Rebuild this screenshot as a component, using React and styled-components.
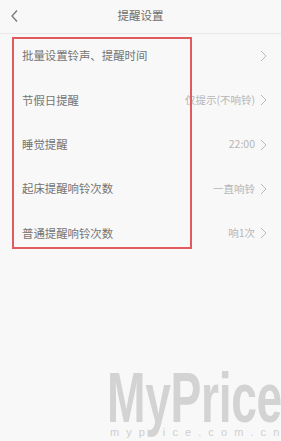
import React from "react";
import styled, { createGlobalStyle } from "styled-components";

const Global = createGlobalStyle`
  html, body { margin: 0; padding: 0; background: #f8f8f8; }
  body { font-family: "Noto Sans CJK SC", "Noto Sans", sans-serif; }
`;

const Screen = styled.div`
  position: relative;
  width: 281px;
  height: 441px;
  overflow: hidden;
  background: #f8f8f8;
`;

const Header = styled.div`
  position: relative;
  height: 33px;
  display: flex;
  align-items: center;
  justify-content: center;
  border-bottom: 1px solid #e8e8e8;
`;

const BackButton = styled.div`
  position: absolute;
  left: 10px;
  top: 9px;
  width: 10px;
  height: 14px;
  display: flex;
`;

const Title = styled.div`
  font-size: 11.5px;
  color: #6e6e6e;
  line-height: 1;
  margin-top: -1px;
`;

const List = styled.div`
  display: flex;
  flex-direction: column;
`;

const Row = styled.div`
  height: 44.3px;
  display: flex;
  align-items: center;
  padding: 0 14px 0 22px;
`;

const Label = styled.div`
  flex: 1;
  font-size: 11.4px;
  color: #747474;
  line-height: 1;
`;

const Value = styled.div`
  font-size: 10.5px;
  color: #b6b6b6;
  line-height: 1;
  margin-right: 5px;
`;

const Chevron = styled.svg`
  width: 7px;
  height: 12px;
  flex: none;
`;

const Highlight = styled.div`
  position: absolute;
  left: 12px;
  top: 37px;
  width: 176px;
  height: 208px;
  border: 2px solid #e05a5e;
  pointer-events: none;
`;

const Watermark = styled.div`
  position: absolute;
  left: 107px;
  top: 370px;
  display: flex;
  flex-direction: column;
  pointer-events: none;
`;

const Brand = styled.div`
  font-family: "Liberation Sans", Arial, sans-serif;
  font-weight: 700;
  font-size: 70px;
  line-height: 56px;
  height: 56px;
  color: #d3d3d3;
  transform: scaleX(0.66);
  transform-origin: left top;
  white-space: nowrap;
  letter-spacing: -0.5px;
`;

const Domain = styled.div`
  font-family: "Liberation Sans", Arial, sans-serif;
  font-size: 11px;
  line-height: 12px;
  color: #cfcfcf;
  letter-spacing: 7.1px;
  margin-left: 3px;
  white-space: nowrap;
`;

const rows = [
  { label: "批量设置铃声、提醒时间", value: "" },
  { label: "节假日提醒", value: "仅提示(不响铃)" },
  { label: "睡觉提醒", value: "22:00" },
  { label: "起床提醒响铃次数", value: "一直响铃" },
  { label: "普通提醒响铃次数", value: "响1次" },
];

const Arrow = () => (
  <Chevron viewBox="0 0 7 12">
    <polyline points="1,1 6,6 1,11" fill="none" stroke="#b8b8b8" strokeWidth="1" />
  </Chevron>
);

export default function App() {
  return (
    <Screen>
      <Global />
      <Header>
        <BackButton>
          <svg width="10" height="14" viewBox="0 0 10 14">
            <polyline points="7,1.5 2,7 7,12.5" fill="none" stroke="#777" strokeWidth="1.3" />
          </svg>
        </BackButton>
        <Title>提醒设置</Title>
      </Header>
      <List>
        {rows.map((r) => (
          <Row key={r.label}>
            <Label>{r.label}</Label>
            {r.value && <Value>{r.value}</Value>}
            <Arrow />
          </Row>
        ))}
      </List>
      <Highlight />
      <Watermark>
        <Brand>MyPrice</Brand>
        <Domain>myprice.com.cn</Domain>
      </Watermark>
    </Screen>
  );
}
